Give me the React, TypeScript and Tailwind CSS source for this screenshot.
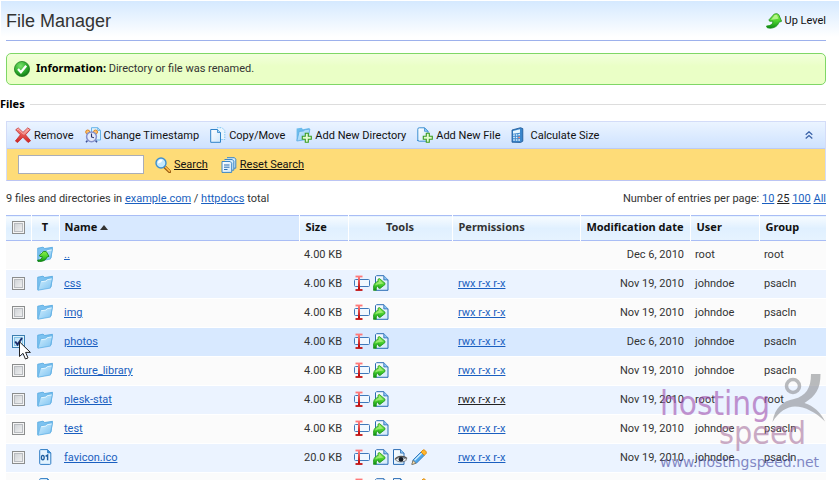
import React, { useState } from "react";

type IconProps = { className?: string };

function Svg({ children, className = "size-4" }: { children: React.ReactNode; className?: string }) {
  return (
    <svg viewBox="0 0 16 16" className={`block shrink-0 ${className}`} aria-hidden="true">
      {children}
    </svg>
  );
}

function Gradients() {
  return (
    <svg width="0" height="0" className="absolute" aria-hidden="true">
      <defs>
        <linearGradient id="green" x1="0" y1="0" x2="0" y2="1">
          <stop offset="0" stopColor="#8df04a" />
          <stop offset="0.55" stopColor="#46cf2c" />
          <stop offset="1" stopColor="#0a8a12" />
        </linearGradient>
        <linearGradient id="blue" x1="0" y1="0" x2="1" y2="1">
          <stop offset="0" stopColor="#d4f0fe" />
          <stop offset="1" stopColor="#7cc2f1" />
        </linearGradient>
        <linearGradient id="paper" x1="0" y1="0" x2="1" y2="1">
          <stop offset="0" stopColor="#ffffff" />
          <stop offset="1" stopColor="#cfe8fb" />
        </linearGradient>
        <linearGradient id="red" x1="0" y1="0" x2="0" y2="1">
          <stop offset="0" stopColor="#f98880" />
          <stop offset="1" stopColor="#cf1f1f" />
        </linearGradient>
        <linearGradient id="redbar" x1="0" y1="0" x2="0" y2="1">
          <stop offset="0" stopColor="#ff8080" />
          <stop offset="1" stopColor="#b80000" />
        </linearGradient>
        <radialGradient id="ball" cx="0.4" cy="0.3" r="0.8">
          <stop offset="0" stopColor="#7be36c" />
          <stop offset="0.55" stopColor="#2cab2c" />
          <stop offset="1" stopColor="#0b6a12" />
        </radialGradient>
      </defs>
    </svg>
  );
}

function UpLevelIcon() {
  return (
    <Svg>
      <path
        d="M0.500 13L1.200 14.700C6 16.200 11.800 14 12.800 9.300L15.600 8.300 12.800 1.800 11 0.700 8.300 1 2.900 6.900 3.600 8.200H6.800C7 11 5 12.800 0.500 13z"
        fill="url(#green)"
        stroke="#1b8d1b"
        strokeWidth="0.8"
      />
      <path d="M5 6.800L8.900 2.100h1.800l1.800 3.300c-2 0.800-4.500 0.800-7.500 1.400z" fill="#d0fba8" opacity="0.7" />
    </Svg>
  );
}

function FolderShape() {
  return (
    <>
      <path d="M0.700 14.800V2.200l5.300-1 1.700 1.300 7.800-1.200-1.500 10.700z" fill="#7cc2f0" stroke="#4fa6de" strokeWidth="0.8" />
      <path d="M1 15.200L3.600 5.800l4.800-0.600 1.700-1.500 5.400-1-2.100 10.400z" fill="url(#blue)" stroke="#64b3e6" strokeWidth="0.8" />
      <path d="M4.300 6.700l4.600-0.600 1.700-1.500 4-0.600" fill="none" stroke="#eefaff" strokeWidth="0.8" />
    </>
  );
}

function FolderIcon() {
  return (
    <Svg>
      <FolderShape />
    </Svg>
  );
}

function ParentFolderIcon() {
  return (
    <Svg>
      <FolderShape />
      <path
        d="M0.600 14.200L1 15.400C5 16 9.200 14.300 9.800 11.200L12 10.300 9.300 5.600 6.500 5.500 2.400 9.400 3 10.500H5.200C5.200 12.600 3.800 14 0.600 14.200z"
        fill="url(#green)"
        stroke="#128012"
        strokeWidth="0.8"
      />
    </Svg>
  );
}

function PlusShape() {
  return (
    <path
      d="M9.300 6.300h3v3h3v3h-3v3h-3v-3h-3v-3h3z"
      fill="#e3fbd0"
      stroke="#3a9c22"
      strokeWidth="1.1"
    />
  );
}

function AddFolderIcon() {
  return (
    <Svg>
      <path d="M0.600 13.500V1.500l5-0.700 1.300 1.500 6.600-1.200-1 9z" fill="#6cbcec" />
      <path d="M0.800 14L3.200 4.500l4.300-0.500 1.400-1.200 5-0.700-2 10.200z" fill="url(#blue)" stroke="#58abe4" strokeWidth="0.8" />
      <PlusShape />
    </Svg>
  );
}

function AddFileIcon() {
  return (
    <Svg>
      <path d="M0.800 14V2.200Q0.800 0.800 2.200 0.800H7.500L11 4.300V14.200H2.200Q0.800 14.200 0.800 13z" fill="url(#paper)" stroke="#3c8fd2" />
      <path d="M7.500 0.800V4.300H11z" fill="#9bd2f6" stroke="#3c8fd2" strokeWidth="0.8" />
      <PlusShape />
    </Svg>
  );
}

function RemoveIcon() {
  return (
    <Svg>
      <path
        d="M0.700 2.800L3.200 0.900 8 5.400 12.700 0.900l2.500 1.700-4.700 5.200 5.100 6-2.500 1.700-5.200-5.300-5.300 5.300-2.200-1.500 5-6.200z"
        fill="url(#red)"
        stroke="#c22a2a"
        strokeWidth="0.8"
      />
      <path d="M1.900 2.700l1.200-0.800L8 6.600l4.700-4.600 1 0.600-4.900 5.100" fill="none" stroke="#ffc9c4" strokeWidth="0.8" />
    </Svg>
  );
}

function TimestampIcon() {
  return (
    <Svg>
      <path d="M6.500 0.700h6.300l2.700 2.700v9.600h-9z" fill="#dff2fd" stroke="#66b3e8" />
      <path d="M12.800 0.700v2.700h2.700" fill="none" stroke="#66b3e8" />
      <path d="M2.500 13.500L1 15.300M10.500 13.500l1.500 1.800" stroke="#3d4f97" strokeWidth="1.5" />
      <circle cx="2.700" cy="5" r="2" fill="#ffc36a" stroke="#d98224" />
      <circle cx="10.500" cy="5" r="2" fill="#ffc36a" stroke="#d98224" />
      <circle cx="6.500" cy="9.800" r="4.900" fill="#e4eafb" stroke="#8490cb" strokeWidth="1.500" />
      <path d="M6.500 6.600v3.300l2.400 0.800" fill="none" stroke="#2b3468" strokeWidth="1.100" />
    </Svg>
  );
}

function CopyIcon() {
  return (
    <Svg>
      <path d="M7 0.700h5l2.800 2.800v9H8" fill="#e9f6fe" stroke="#7cc3ef" strokeDasharray="1.500 1" />
      <path d="M0.700 2.500h6.800l3 3v9.800H0.700z" fill="url(#paper)" stroke="#2f83c8" />
      <path d="M7.500 2.500v3h3" fill="#a9d9f7" stroke="#2f83c8" strokeWidth="0.8" />
    </Svg>
  );
}

function CalculatorIcon() {
  return (
    <Svg>
      <path d="M1 3L9.500 0.700l2.300 0.900v12.600l-2.200 1.300L1 15.200z" fill="#3a86cc" stroke="#1a5494" strokeWidth="0.8" />
      <path d="M2 3.900l7-1.600v3.400l-7 1z" fill="#e6f6ff" />
      <path d="M2.200 8.200l1.600-0.100M4.800 8l1.600-0.100M7.300 7.800L9 7.600M2.200 10.600h1.600M4.800 10.500h1.600M2.200 13h1.600M4.800 13h1.600M7.300 13H9" stroke="#e2f4ff" strokeWidth="1.500" />
      <path d="M7.300 10.400H9" stroke="#ff8a70" strokeWidth="1.500" />
    </Svg>
  );
}

function SearchIcon() {
  return (
    <Svg>
      <path d="M9.800 10l4.800 4.600" stroke="#9a5a10" strokeWidth="3.200" strokeLinecap="round" />
      <path d="M10.300 10l4.200 4.100" stroke="#ffc04a" strokeWidth="1.500" strokeLinecap="round" />
      <circle cx="6" cy="6" r="5" fill="#c4e9fd" stroke="#3d8fd0" strokeWidth="1.400" />
      <path d="M3 6.500A3.200 3.200 0 0 1 7.500 2.900C6.800 5 5 6 3 6.500z" fill="#fff" />
    </Svg>
  );
}

function ResetIcon() {
  return (
    <Svg>
      <path d="M6 0.700h7.500l1.300 1.500v9H13" fill="#d2ebfb" stroke="#3c86c4" />
      <path d="M3.500 2.500h7.800l1.500 1.700v9H11" fill="#d2ebfb" stroke="#3c86c4" />
      <path d="M1 4.500h8.200l1.500 1.700v9.200H1z" fill="url(#paper)" stroke="#3c86c4" />
      <path d="M3 8h5.500M3 10.200h5.500M3 12.500h3.500" stroke="#2b6db0" />
    </Svg>
  );
}

function RenameIcon() {
  return (
    <Svg>
      <rect x="0.500" y="4.500" width="15" height="7" rx="1" fill="#f0f8ff" stroke="#3f78ba" />
      <path d="M1.500 15h7" stroke="#c21212" strokeWidth="1.800" />
      <path d="M1.500 1.500h7" stroke="#ff7777" strokeWidth="1.800" />
      <path d="M4 1.500h2v13H4z" fill="url(#redbar)" />
    </Svg>
  );
}

function MoveIcon() {
  return (
    <Svg>
      <path d="M3.500 0.700h7.300L15 4.900v10.400H2.500V1.700z" fill="url(#paper)" stroke="#2a6cb4" />
      <path d="M10.800 0.700v4.200H15" fill="#8dc6f3" stroke="#2a6cb4" strokeWidth="0.800" />
      <path d="M0.600 15.400C-0.200 10.500 1.400 7.400 5 6.400V4.200l1.500-0.600 5.500 4.600v1.300l-5 4-1.500-0.500v-2.100c-1.800 0.300-2.300 1.800-2.200 4.300z" fill="url(#green)" stroke="#23951f" strokeWidth="0.800" />
      <path d="M5.800 7V4.800l4.700 3.800-4 0.600c-2 0-3.300 0.500-4.300 1.500C2.700 8.500 3.900 7.400 5.800 7z" fill="#c4f59a" opacity="0.600" />
    </Svg>
  );
}

function ViewIcon() {
  return (
    <Svg>
      <path d="M1.500 0.600h7L12 4.100v11.300H1.500z" fill="url(#paper)" stroke="#2a6cb4" />
      <path d="M8.500 0.600v3.500H12" fill="#8dc6f3" stroke="#2a6cb4" strokeWidth="0.800" />
      <path d="M3 10.500C5.500 6.500 12 6.300 15 9.500" fill="none" stroke="#55504c" strokeWidth="1.300" />
      <path d="M3.500 10.800c2.500-3 8-3 11.200 0-3 2.800-8.500 2.800-11.200 0z" fill="#f5f5f5" stroke="#555" strokeWidth="0.700" />
      <circle cx="9" cy="10.400" r="2.400" fill="#121a26" />
    </Svg>
  );
}

function EditIcon() {
  return (
    <Svg>
      <path d="M1 15.300l1.200-4.500L10 3l3.300 3.300-7.800 7.800z" fill="#4fa6ea" stroke="#2c74b8" strokeWidth="0.900" />
      <path d="M3.600 11.300l7.100-7.100" stroke="#d4f0ff" strokeWidth="1.300" />
      <path d="M10 3L12 1c1.200-0.900 4.200 1.800 3.200 3.400l-1.900 1.900z" fill="#ffb62e" stroke="#d98a12" strokeWidth="0.900" />
      <path d="M0.800 15.500l1.300-4 2.800 2.800z" fill="#fbe2b5" stroke="#7a5a30" strokeWidth="0.600" />
    </Svg>
  );
}

function BinaryFileIcon() {
  return (
    <Svg>
      <path d="M2.700 1.600Q2.700 0.600 3.700 0.600H10.500L13.800 3.900V14.400Q13.800 15.400 12.800 15.400H3.700Q2.700 15.400 2.700 14.400z" fill="#e2f3ff" stroke="#2f7cc4" />
      <path d="M10.500 0.600v3.300h3.300" fill="#3b8bd0" stroke="#2f7cc4" strokeWidth="0.800" />
      <ellipse cx="5.800" cy="8.600" rx="1.400" ry="2.300" fill="none" stroke="#1b5c9e" strokeWidth="1.300" />
      <path d="M8.600 7.400l2-1.300v5.200" fill="none" stroke="#1b5c9e" strokeWidth="1.400" />
    </Svg>
  );
}

function OkIcon() {
  return (
    <Svg>
      <circle cx="8" cy="8" r="7.600" fill="url(#ball)" stroke="#16751b" strokeWidth="0.700" />
      <path d="M4 8l2.900 3.300L12.200 4.700" fill="none" stroke="#fff" strokeWidth="2.200" />
    </Svg>
  );
}

function CollapseIcon() {
  return (
    <svg viewBox="0 0 8 8" className="block size-2" aria-hidden="true">
      <path d="M0.700 3.700L4 0.800 7.300 3.700M0.700 7.500L4 4.600 7.300 7.500" fill="none" stroke="#3a62a8" strokeWidth="1.300" />
    </svg>
  );
}

const toolbar = [
  { label: "Remove", Icon: RemoveIcon },
  { label: "Change Timestamp", Icon: TimestampIcon },
  { label: "Copy/Move", Icon: CopyIcon },
  { label: "Add New Directory", Icon: AddFolderIcon },
  { label: "Add New File", Icon: AddFileIcon },
  { label: "Calculate Size", Icon: CalculatorIcon },
];

type Row = {
  name: string;
  kind: "parent" | "folder" | "file";
  size: string;
  perm?: string;
  permDark?: boolean;
  date: string;
  user: string;
  group: string;
};

const rows: Row[] = [
  { name: "..", kind: "parent", size: "4.00 KB", date: "Dec 6, 2010", user: "root", group: "root" },
  { name: "css", kind: "folder", size: "4.00 KB", perm: "rwx r-x r-x", date: "Nov 19, 2010", user: "johndoe", group: "psacln" },
  { name: "img", kind: "folder", size: "4.00 KB", perm: "rwx r-x r-x", date: "Nov 19, 2010", user: "johndoe", group: "psacln" },
  { name: "photos", kind: "folder", size: "4.00 KB", perm: "rwx r-x r-x", date: "Dec 6, 2010", user: "johndoe", group: "psacln" },
  { name: "picture_library", kind: "folder", size: "4.00 KB", perm: "rwx r-x r-x", date: "Nov 19, 2010", user: "johndoe", group: "psacln" },
  { name: "plesk-stat", kind: "folder", size: "4.00 KB", perm: "rwx r-x r-x", permDark: true, date: "Nov 19, 2010", user: "root", group: "root" },
  { name: "test", kind: "folder", size: "4.00 KB", perm: "rwx r-x r-x", date: "Nov 19, 2010", user: "johndoe", group: "psacln" },
  { name: "favicon.ico", kind: "file", size: "20.0 KB", perm: "rwx r-x r-x", date: "Nov 19, 2010", user: "johndoe", group: "psacln" },
  { name: "", kind: "file", size: "", date: "", user: "", group: "" },
];

function Check({ label, checked, onChange }: { label: string; checked: boolean; onChange: () => void }) {
  return (
    <span className="relative mx-auto block size-[13px]">
      <input
        type="checkbox"
        aria-label={label}
        checked={checked}
        onChange={onChange}
        className="block size-[13px] appearance-none border border-[#8b8d8d] bg-linear-to-br from-[#c9cdd1] to-[#f6f6f6] shadow-[inset_0_0_0_1px_#f4f4f4,inset_0_0_0_2px_#b9bcc0] checked:border-[#3c7fb1] checked:from-[#b5dff7] checked:to-[#e8f6fd] checked:shadow-[inset_0_0_0_1px_#def2fc,inset_0_0_0_2px_#85c3e8]"
      />
      {checked && (
        <svg viewBox="0 0 13 13" className="pointer-events-none absolute inset-0" aria-hidden="true">
          <path d="M3.200 6.500l2.300 3L10 3" fill="none" stroke="#1d2c6b" strokeWidth="2" />
        </svg>
      )}
    </span>
  );
}

function ToolButton({ label, Icon }: { label: string; Icon: React.ComponentType<IconProps> }) {
  return (
    <button type="button" aria-label={label} className="block">
      <Icon />
    </button>
  );
}

const link = "text-[#1a5fc0] underline";
const darkLink = "text-[#222] underline";

function FileRow({ row, checked, onToggle, stripe }: { row: Row; checked: boolean; onToggle: () => void; stripe: boolean }) {
  const bg = checked ? "bg-[#d8e9ff]" : stripe ? "bg-[#ebf3ff]" : "bg-[#fbfbfb]";
  const tools = row.kind !== "parent";
  return (
    <tr className={`h-[29px] border-b border-white ${bg}`}>
      <td className="pb-[2px]">{tools && <Check label={`Select ${row.name}`} checked={checked} onChange={onToggle} />}</td>
      <td className="pb-[2px] pl-[6px]">
        {row.kind === "parent" ? <ParentFolderIcon /> : row.kind === "folder" ? <FolderIcon /> : <BinaryFileIcon />}
      </td>
      <td className="pl-[5px]">
        <a href="#" className={link}>{row.name}</a>
      </td>
      <td className="pr-[6px] text-right">{row.size}</td>
      <td className="pb-[2px] pl-[6px]">
        {tools && (
          <div className="flex gap-[3px]">
            <ToolButton label={`Rename ${row.name}`} Icon={RenameIcon} />
            <ToolButton label={`Move ${row.name}`} Icon={MoveIcon} />
            {row.kind === "file" && (
              <>
                <ToolButton label={`View ${row.name}`} Icon={ViewIcon} />
                <ToolButton label={`Edit ${row.name}`} Icon={EditIcon} />
              </>
            )}
          </div>
        )}
      </td>
      <td className="pl-[6px]">
        {row.perm && (
          <a href="#" className={row.permDark ? darkLink : link}>{row.perm}</a>
        )}
      </td>
      <td className="pr-[6px] text-right">{row.date}</td>
      <td className="pl-[5px]">{row.user}</td>
      <td className="pl-[5px]">{row.group}</td>
    </tr>
  );
}

function Watermark() {
  return (
    <div className="pointer-events-none absolute top-[374px] right-[14px] h-[100px] w-[166px] opacity-60" aria-hidden="true">
      <span className="absolute top-[6px] left-0 font-['DejaVu_Sans_Condensed','Open_Sans',sans-serif] text-[33px] leading-[48px] text-[#a04fae]">hosting</span>
      <span className="absolute top-[35px] right-[20px] font-['DejaVu_Sans_Condensed','Open_Sans',sans-serif] text-[32px] leading-[48px] text-[#a9749f]">speed</span>
      <span className="absolute top-[79px] left-0 font-['DejaVu_Sans',sans-serif] text-[14px] leading-[18px] whitespace-nowrap text-[#3a3f9e]">www.hostingspeed.net</span>
      <svg viewBox="0 0 56 50" className="absolute top-0 right-0 h-[50px] w-[56px]">
        <circle cx="23" cy="12" r="6.500" fill="none" stroke="#8d8f93" strokeWidth="3.500" />
        <path d="M41 0h9.500c0 15-5 22-16 29 9 3 16 9 20.500 18.500-9-9-20-15-30-15-8 0-16 5-22.500 15.500C5 33 13 27 24 25 36 22 41 14 41 0z" fill="#8d8f93" />
      </svg>
    </div>
  );
}

export default function App() {
  const [selected, setSelected] = useState<string[]>(["photos"]);
  const toggle = (name: string) =>
    setSelected((s) => (s.includes(name) ? s.filter((n) => n !== name) : [...s, name]));
  const th = "border-l border-white text-[#111]";

  return (
    <div className="relative h-screen overflow-hidden bg-white p-px font-[Roboto,'Noto_Sans',sans-serif] text-[11px] leading-[14px] text-[#333]">
      <Gradients />
      <header className="bg-linear-to-b from-[#d5e9ff] to-white to-90% pr-[13px] pl-[5px]">
        <div className="flex h-10 items-center justify-between border-b border-[#9db1ec]">
          <h1 className="font-['Liberation_Sans',Arial,sans-serif] text-lg text-[#333]">File Manager</h1>
          <a href="#" className="flex items-center gap-[3px] text-[#111]">
            <UpLevelIcon />
            Up Level
          </a>
        </div>
      </header>

      <main className="pr-[13px] pl-[5px]">
        <div role="status" className="mt-3 flex h-8 items-center gap-[6px] rounded-[5px] border border-[#7fd766] bg-linear-to-b from-[#f2ffdc] to-[#eaffc6] to-40% px-[7px]">
          <OkIcon />
          <p className="pb-0.5">
            <b className="font-['Noto_Sans',sans-serif] text-black">Information:</b> Directory or file was renamed.
          </p>
        </div>

        <div className="-ml-[6px] mt-3 flex items-center gap-[5px]">
          <h2 className="font-['Noto_Sans',sans-serif] font-bold text-black">Files</h2>
          <hr className="grow border-[#ddd]" />
        </div>

        <section className="mt-[10px] border border-[#d3dcf8] border-b-[#bcc5f3]">
          <div className="flex h-[27px] items-center gap-[11px] border-b border-[#bccbf5] bg-linear-to-b from-[#ebf4ff] to-[#cee2ff] pr-[12px] pl-[8px] text-[#111]">
            {toolbar.map(({ label, Icon }) => (
              <button key={label} type="button" className="flex items-center gap-[3px] whitespace-nowrap">
                <Icon />
                <span className="pt-0.5">{label}</span>
              </button>
            ))}
            <button type="button" aria-label="Collapse" className="ml-auto">
              <CollapseIcon />
            </button>
          </div>
          <form className="flex h-[31px] items-center bg-[#fedc78] pl-[11px] text-[#111]" onSubmit={(e) => e.preventDefault()}>
            <input type="text" aria-label="Search files" className="h-[19px] w-[126px] border border-[#a9adb8] bg-white px-1 outline-none" />
            <button type="submit" className="ml-[11px] flex items-center gap-[3px] underline">
              <SearchIcon />
              Search
            </button>
            <button type="reset" className="ml-[13px] flex items-center gap-[3px] underline">
              <ResetIcon />
              Reset Search
            </button>
          </form>
        </section>

        <div className="flex h-[34px] items-center justify-between pt-0.5">
          <p>
            9 files and directories in <a href="#" className={link}>example.com</a> / <a href="#" className={link}>httpdocs</a> total
          </p>
          <p>
            Number of entries per page: <a href="#" className={link}>10</a> <a href="#" className={darkLink}>25</a>{" "}
            <a href="#" className={link}>100</a> <a href="#" className={link}>All</a>
          </p>
        </div>

        <table className="w-full table-fixed border-collapse whitespace-nowrap">
          <colgroup>
            <col className="w-[25px]" />
            <col className="w-[28px]" />
            <col />
            <col className="w-[49px]" />
            <col className="w-[104px]" />
            <col className="w-[128px]" />
            <col className="w-[110px]" />
            <col className="w-[69px]" />
            <col className="w-[67px]" />
          </colgroup>
          <thead className="font-['Noto_Sans',sans-serif]">
            <tr className="h-[25px] border-y border-[#a9bdf5] bg-linear-to-b from-[#f6fbff] via-[#e0f0ff] via-50% to-[#e6f3ff] *:pb-[2px]">
              <th>
                <Check
                  label="Select all"
                  checked={false}
                  onChange={() => setSelected(rows.filter((r) => r.name && r.kind !== "parent").map((r) => r.name))}
                />
              </th>
              <th className={th}>T</th>
              <th className="border-l border-white bg-[#d8e9ff] pl-[5px] text-left text-[#111]">
                <span className="flex items-center gap-[3px]">
                  Name
                  <svg viewBox="0 0 8 5" className="h-[5px] w-2" aria-hidden="true">
                    <path d="M4 0L8 5H0z" fill="#333" />
                  </svg>
                </span>
              </th>
              <th className={`${th} pl-[6px] text-left`}>Size</th>
              <th className="border-l border-white text-[#333]">Tools</th>
              <th className="border-l border-white pl-[6px] text-left text-[#333]">Permissions</th>
              <th className={`${th} pr-[6px] text-right`}>Modification date</th>
              <th className={`${th} pl-[6px] text-left`}>User</th>
              <th className={`${th} pl-[6px] text-left`}>Group</th>
            </tr>
          </thead>
          <tbody>
            {rows.map((row, i) => (
              <FileRow
                key={i}
                row={row}
                stripe={i % 2 === 1}
                checked={row.name !== "" && selected.includes(row.name)}
                onToggle={() => toggle(row.name)}
              />
            ))}
          </tbody>
        </table>
      </main>

      <Watermark />

      <svg viewBox="0 0 12 19" className="pointer-events-none absolute top-[341px] left-[19px] h-[19px] w-3" aria-hidden="true">
        <path d="M0.500 0.800V15.500L4 12.300 6.400 18l2.600-1.100L6.600 11.400h4.800z" fill="#fff" stroke="#222" />
      </svg>
    </div>
  );
}
